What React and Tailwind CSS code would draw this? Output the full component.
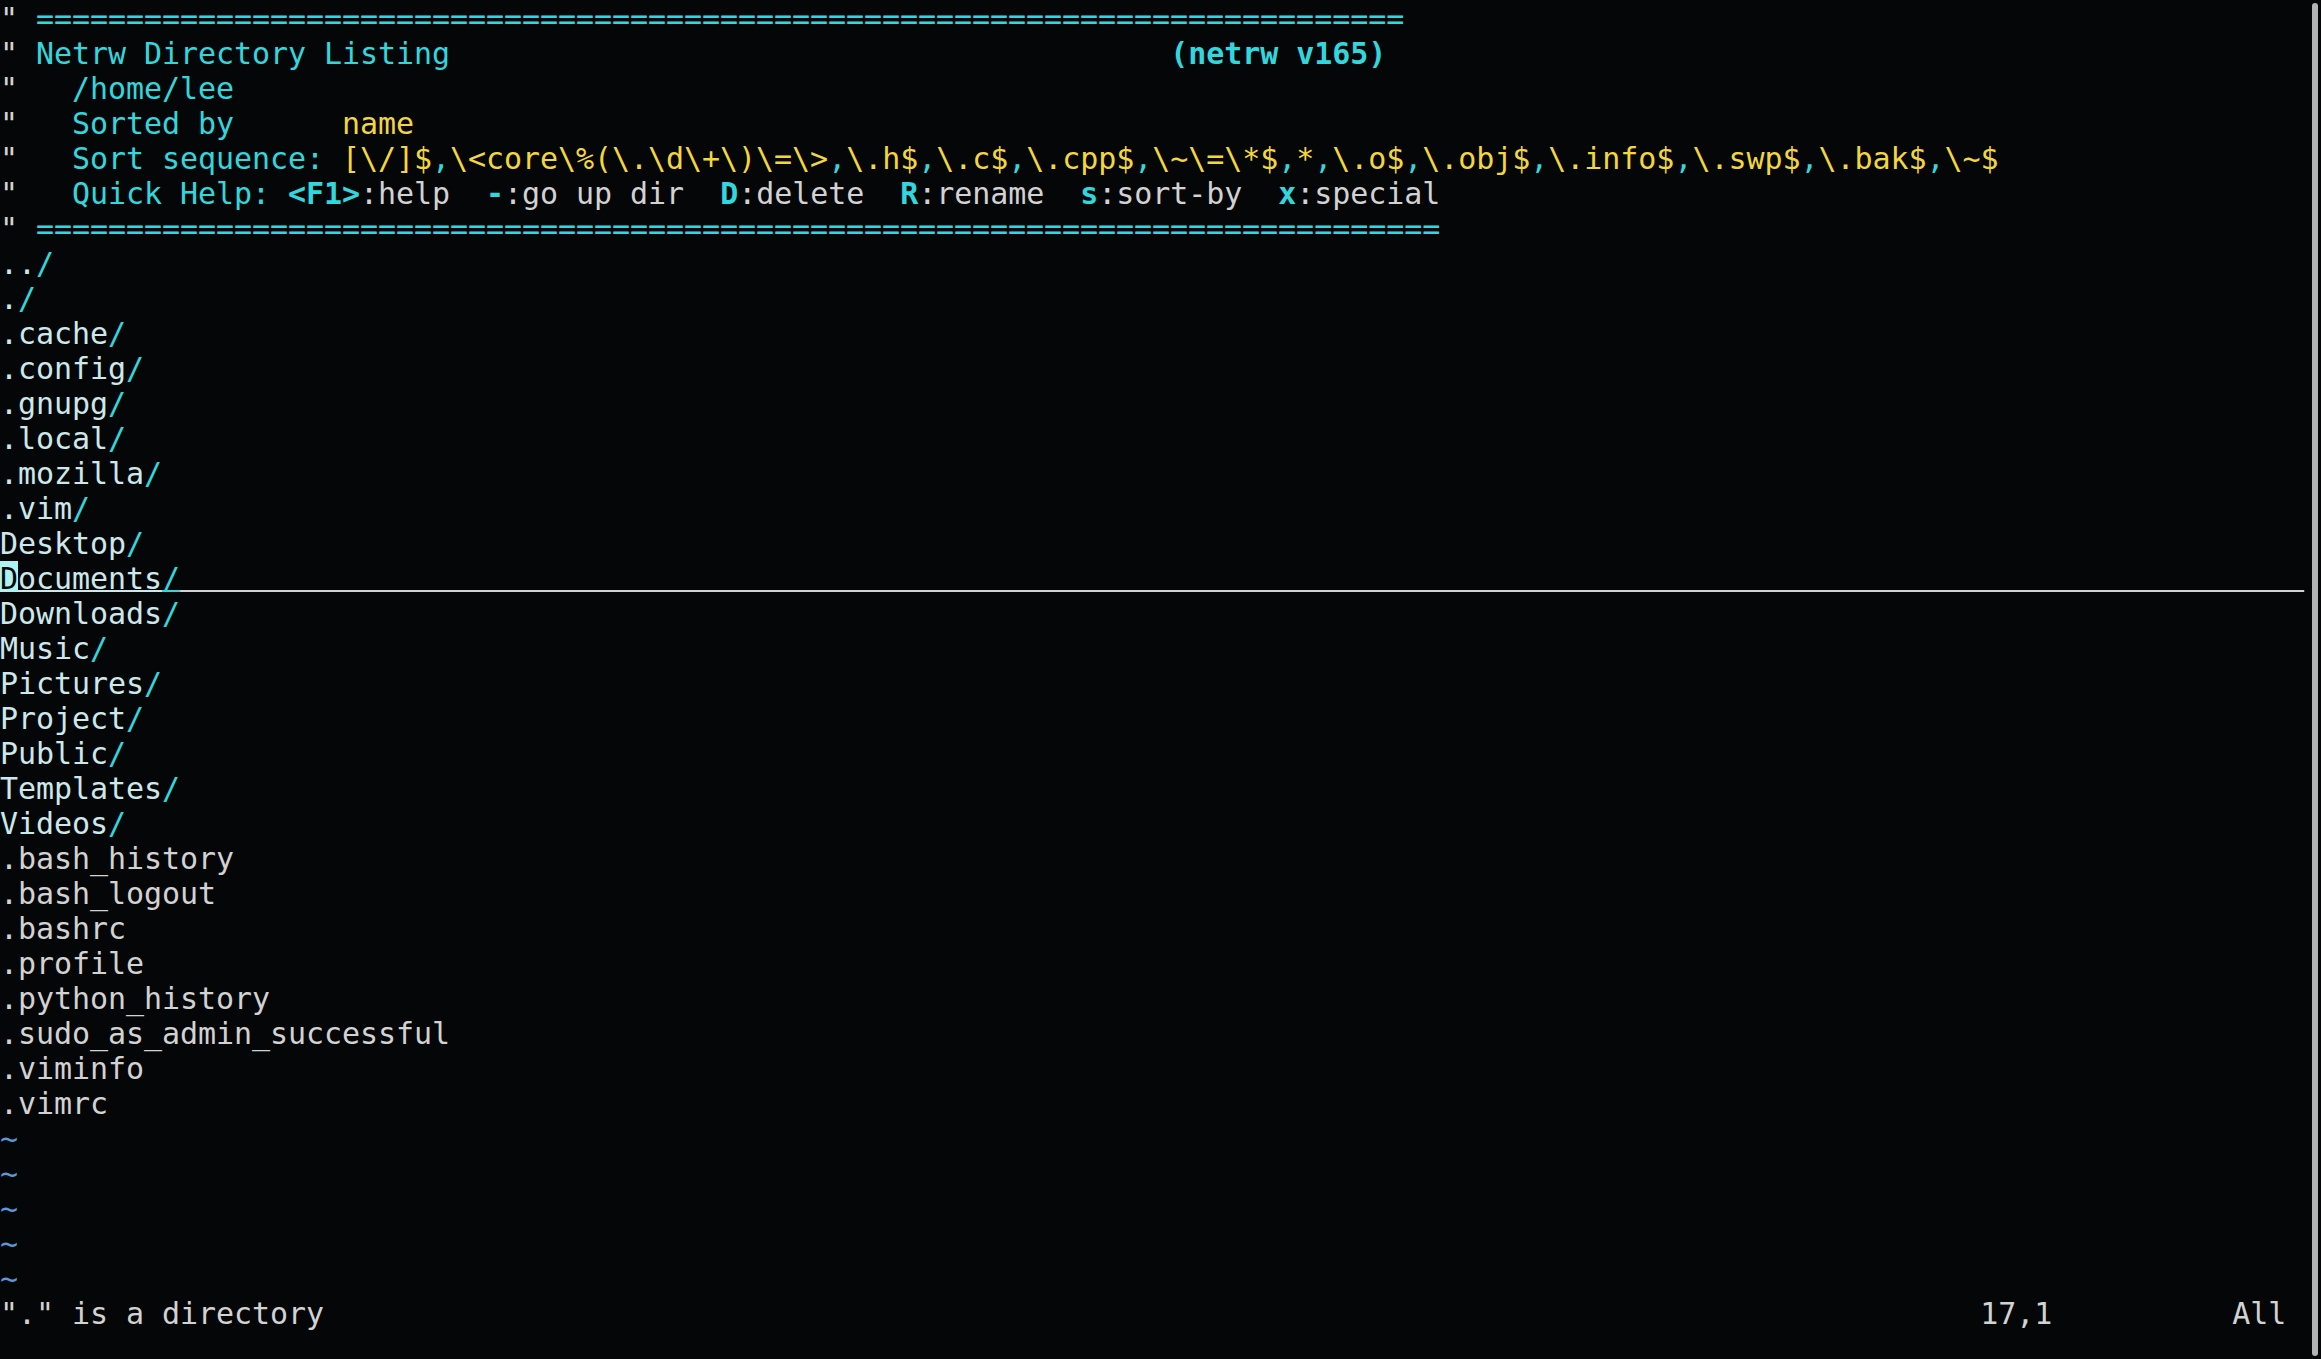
import React from 'react';

// vim netrw listing, 128 cols x 38 rows, 18px cells, 35px lines
const GREY = 'text-[#d2d2d2]';
const CYAN = 'text-[#32d7dd]';
const CYAN_B = 'text-[#32d7dd] font-bold';
const YELLOW = 'text-[#f3d63c]';
const DIR = 'text-[#cde8ea]';
const TILDE = 'text-[#5a98d8]';

const SEQ = '[\\/]$,\\<core\\%(\\.\\d\\+\\)\\=\\>,\\.h$,\\.c$,\\.cpp$,\\~\\=\\*$,*,\\.o$,\\.obj$,\\.info$,\\.swp$,\\.bak$,\\~$';

function seqSegments() {
  const parts = SEQ.split(',');
  const out = [];
  parts.forEach((p, i) => {
    out.push([p, YELLOW]);
    if (i < parts.length - 1) out.push([',', CYAN]);
  });
  return out;
}

const header = [
  [['"', GREY], [' ' + '='.repeat(76), CYAN]],
  [['"', GREY], [' Netrw Directory Listing' + ' '.repeat(40), CYAN], ['(netrw v165)', CYAN_B]],
  [['"', GREY], ['   /home/lee', CYAN]],
  [['"', GREY], ['   Sorted by      ', CYAN], ['name', YELLOW]],
  [['"', GREY], ['   Sort sequence: ', CYAN], ...seqSegments()],
  [
    ['"', GREY], ['   Quick Help: ', CYAN],
    ['<F1>', CYAN_B], [':help  ', GREY],
    ['-', CYAN_B], [':go up dir  ', GREY],
    ['D', CYAN_B], [':delete  ', GREY],
    ['R', CYAN_B], [':rename  ', GREY],
    ['s', CYAN_B], [':sort-by  ', GREY],
    ['x', CYAN_B], [':special', GREY],
  ],
  [['"', GREY], [' ' + '='.repeat(78), CYAN]],
];

const dirs = ['..', '.', '.cache', '.config', '.gnupg', '.local', '.mozilla', '.vim', 'Desktop', 'Documents', 'Downloads', 'Music', 'Pictures', 'Project', 'Public', 'Templates', 'Videos'];
const files = ['.bash_history', '.bash_logout', '.bashrc', '.profile', '.python_history', '.sudo_as_admin_successful', '.viminfo', '.vimrc'];

function Line({ children }) {
  return <div className="h-[35px] whitespace-pre">{children}</div>;
}

function Segs({ segs }) {
  return segs.map(([t, cls], i) => (
    <span key={i} className={cls}>{t}</span>
  ));
}

function CursorRow({ name }) {
  const rest = name.slice(1);
  const pad = ' '.repeat(128 - name.length - 1);
  return (
    <Line>
      <span className="inline-block h-[29px] align-top bg-[#aef2f2] text-[#06080a] underline decoration-2 decoration-[#aef2f2]">{name[0]}</span>
      <span className={`${DIR} underline decoration-2`}>{rest}</span>
      <span className={`${CYAN} underline decoration-2`}>/</span>
      <span className={`${GREY} underline decoration-2`}>{pad}</span>
    </Line>
  );
}

export default function App() {
  return (
    <div className="flex h-[1359px] w-full overflow-hidden bg-[#050608] font-['DejaVu_Sans_Mono',monospace] text-[30px] leading-[35px] tracking-[-0.06px]">
      <div className="w-[2305px] shrink-0 overflow-hidden pt-[1px]">
        {header.map((segs, i) => (
          <Line key={`h${i}`}><Segs segs={segs} /></Line>
        ))}
        {dirs.map((d) =>
          d === 'Documents' ? (
            <CursorRow key={d} name={d} />
          ) : (
            <Line key={d}>
              <span className={DIR}>{d}</span>
              <span className={CYAN}>/</span>
            </Line>
          )
        )}
        {files.map((f) => (
          <Line key={f}><span className={GREY}>{f}</span></Line>
        ))}
        {[0, 1, 2, 3, 4].map((i) => (
          <Line key={`t${i}`}><span className={TILDE}>~</span></Line>
        ))}
        <Line>
          <span className={GREY}>
            {'"." is a directory' + ' '.repeat(110 - 18) + '17,1' + ' '.repeat(10) + 'All'}
          </span>
        </Line>
      </div>
      <div className="ml-[7px] mt-[3px] h-[1353px] w-[6px] shrink-0 rounded-full bg-[#b3b3b3]" />
    </div>
  );
}
